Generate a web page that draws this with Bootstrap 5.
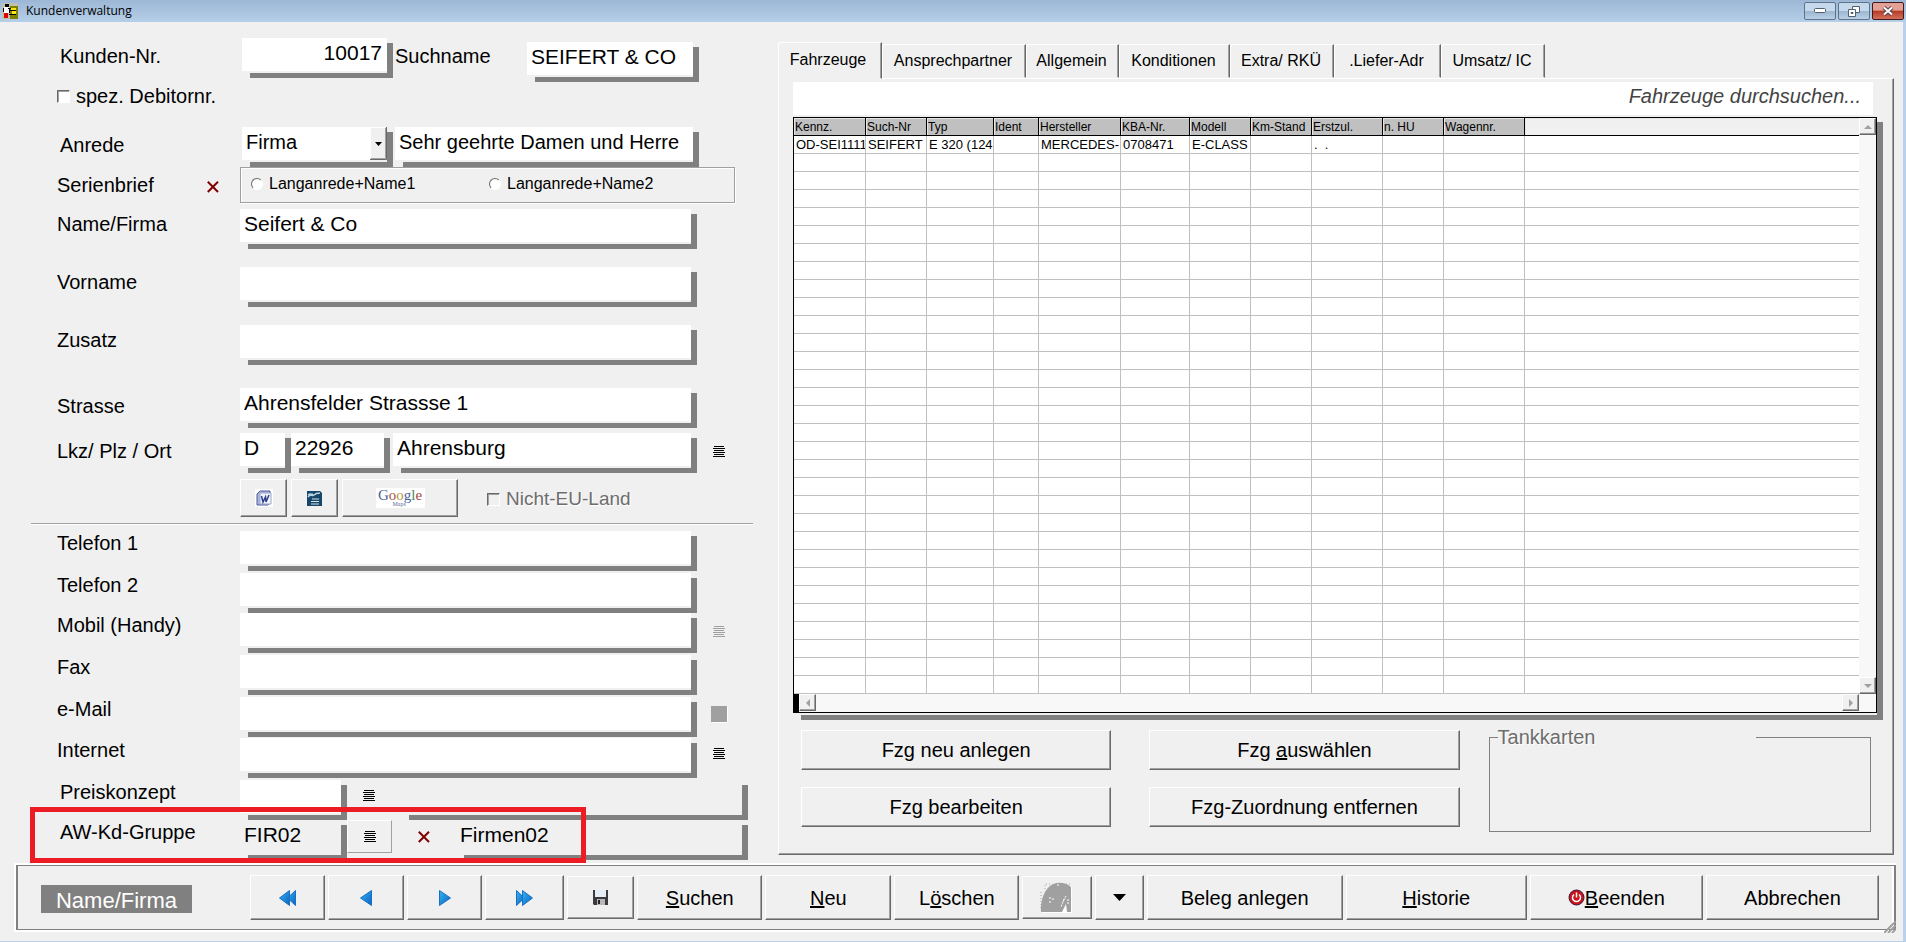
<!DOCTYPE html>
<html lang="de">
<head>
<meta charset="utf-8">
<meta name="viewport" content="width=device-width, initial-scale=1">
<title>Kundenverwaltung</title>
<link href="https://cdn.jsdelivr.net/npm/bootstrap@5.3.0/dist/css/bootstrap.min.css" rel="stylesheet">
<style>
:root{--face:#f0f0f0;--shade:#808080;--edge:#696969;--soft:#a0a0a0}
body{background:var(--face);color:#000;font-family:"Liberation Sans",Arial,sans-serif;font-size:20px;line-height:24px}
.window{border-right:3px solid #b9d1ea;border-bottom:1px solid #b9d1ea}
.titlebar{height:22px;margin-right:-3px;padding:0 2px;background:linear-gradient(#9cb7d5,#b6cfe9);font:12px/22px "Open Sans","Noto Sans",sans-serif}
.capbtn{width:32px;height:18px;padding:0;border:1px solid #5f7389;border-radius:2px;background:linear-gradient(#c5d8ec 48%,#9bb5d0 50%,#b9cfe5);display:flex;align-items:center;justify-content:center}
.capclose{border-color:#43181a;background:linear-gradient(#e3a196 45%,#b83a24 50%,#d2705b)}
.panes{display:grid;grid-template-columns:minmax(0,778fr) minmax(0,1125fr)}
.formpane{padding-top:16px}
.line{display:flex;align-items:flex-start;padding-left:57px}
.cap{flex:0 0 183px}
.inset .cap{padding-left:3px}
.low{padding-top:6px}
.mid{padding-top:3px}
.tail{flex:0 0 81px;display:flex;padding-left:16px}
.tail-s{flex:0 0 30px}
.grow{flex:1 1 0;min-width:0}
.lead-fld{flex:0 0 151px;margin-left:2px}
.s1{margin-top:1px}.s2{margin-top:2px}.s6{margin-top:6px}.s18{margin-top:18px}.s23{margin-top:23px}
/* sunken field with a hard drop shadow to the lower right */
.fld{display:flex;min-width:0;padding:0 6px 7px 0;
 background:linear-gradient(var(--shade),var(--shade)) right bottom/6px calc(100% - 5px) no-repeat,
 linear-gradient(var(--shade),var(--shade)) right bottom/calc(100% - 8px) 5px no-repeat}
.fld input,.fld select{width:100%;min-width:0;height:33px;border:0;border-radius:0;padding:0 5px 3px 4px;background-color:#fff;color:#000;font-size:21px;line-height:24px;outline:0}
.fld .tight{font-size:20px}
.fld input[readonly]{background:var(--face)}
.fld select{appearance:none;background:#fff url("data:image/svg+xml,%3Csvg xmlns='http://www.w3.org/2000/svg' width='17' height='33'%3E%3Cpath fill='%23f0f0f0' d='M0 0h17v33H0z'/%3E%3Cpath fill='none' stroke='%23fff' d='M.5 31V.5H15'/%3E%3Cpath fill='none' stroke='%23a0a0a0' d='M1 31.5h14.500V1'/%3E%3Cpath fill='none' stroke='%23696969' d='M0 32.500h16.500V0'/%3E%3Cpath d='M5 15h7l-3.500 4z'/%3E%3C/svg%3E") right top no-repeat}
.raised,.raised:hover,.raised:active,.raised:disabled{--bs-btn-padding-x:0;--bs-btn-padding-y:0;background:var(--face)!important;border:1px solid!important;border-color:#fff var(--edge) var(--edge) #fff!important;border-radius:0;box-shadow:inset -1px -1px var(--soft);color:#000!important;font-size:20px;line-height:24px;opacity:1;display:flex;align-items:center;justify-content:center;white-space:nowrap;min-width:0}
.raised.thin{width:45px;height:33px;border-color:#fff var(--soft) var(--soft) #fff!important;box-shadow:none}
.flat{padding:0;border:0;background:none;display:block;line-height:0}
.tick{appearance:none;width:13px;height:13px;margin:0;background:#fff;border:1px solid;border-color:var(--edge) #fff #fff var(--edge);box-shadow:inset 1px 1px var(--soft)}
.tick:disabled{background:var(--face)}
.tick+label,.rad+label{padding-left:6px}
.rad{appearance:none;width:12px;height:12px;margin:0;border-radius:50%;background:#fff;border:1px solid;border-color:var(--edge) #fff #fff var(--edge)}
.options{height:36px;padding-left:10px;border:1px solid var(--soft);box-shadow:inset 1px 1px #fff,1px 1px #fff;font-size:16px;line-height:20px;padding-bottom:3px}
.greyed{color:#6d6d6d;text-shadow:1px 1px #fff}
.nocountry{margin:8px 0 0 29px;font-size:19px}
.rule{height:2px;margin:6px 25px 6px 31px;background:linear-gradient(var(--soft) 50%,#fff 50%)}
.toolsrow .raised{height:38px;width:47px}
.toolsrow .maps{width:116px}
.glogo{background:#fff;width:49px;height:20px;font:15px/14px "Liberation Serif",serif;position:relative}
.glogo small{position:absolute;left:17px;top:13px;font-size:6px;line-height:6px;color:#5a6b9c}
.marker{position:absolute;left:30px;top:-13px;width:556px;height:56px;border:5px solid #ed1c24;pointer-events:none}
/* register */
.rightpane{padding:20px 9px 8px 0}
.tabsrow{display:flex;align-items:flex-end;height:36px;margin-bottom:0;border:0;flex-wrap:nowrap}
.tabsrow .nav-item{min-width:0;flex:0 1 104px}
.tabsrow .nav-item:nth-child(2){flex-basis:144px}
.tabsrow .nav-item:nth-child(3){flex-basis:93px}
.tabsrow .nav-item:nth-child(4){flex-basis:111px}
.tabsrow .nav-item:nth-child(6){flex-basis:107px}
.tabsrow .nav-link{width:100%;height:34px;margin:0;padding:0 2px 0 0;border:1px solid;border-color:#fff var(--edge) transparent #fff;border-radius:3px 0 0 0;box-shadow:inset -1px 0 var(--soft);background:var(--face);color:#000;font-size:16px;line-height:24px;white-space:nowrap;overflow:hidden}
.tabsrow .nav-link.active{height:37px;margin-bottom:-1px;padding:0 4px 2px 0;background:var(--face);color:#000;border-color:#fff var(--edge) var(--face) #fff;position:relative}
.page{border:1px solid;border-color:#fff var(--edge) var(--edge) #fff;box-shadow:inset -1px -1px var(--soft);padding:3px 10px 22px 14px}
.seekbox{padding-right:10px}
.seek{display:block;width:100%;height:33px;border:0;padding:0 12px 4px;text-align:right;font-size:20px;font-style:italic;background:#fff}
.seek::placeholder{color:#444;opacity:1}
.gridbox{display:block;margin-top:2px}
.frame{border:1px solid #000;background:#fff}
.cars{table-layout:fixed;width:100%;border-collapse:separate;border-spacing:0;font-size:13px;line-height:16px}
.cars th,.cars td{height:18px;padding:0 0 0 2px;overflow:hidden;white-space:nowrap;border-right:1px solid #c0c0c0;border-bottom:1px solid #c0c0c0}
.cars th{font-size:12px;font-weight:400;padding-left:1px;background:#c0c0c0;border-color:#000;box-shadow:inset 1px 1px #e6e6e6}
.cars th:last-child{background:var(--face)}
.cars th:last-child,.cars td:last-child{border-right:0}
.track{background:#f8f8f8}
.hscroll{height:18px;padding-right:17px;border-left:5px solid #000}
.arrow{width:17px;height:17px;padding:0;background:var(--face);border:1px solid;border-color:#fff var(--edge) var(--edge) #fff;box-shadow:inset -1px -1px var(--soft);display:flex;align-items:center;justify-content:center}
.cmds{display:grid;grid-template-columns:310fr 310fr 373fr;column-gap:38px;margin:10px 12px 0 8px;align-items:start}
.cmds .raised{height:40px}
.cmds .raised+.raised{margin-top:17px}
.cmds fieldset{min-width:0;height:108px;margin:-6px 0 0 -9px;border:1px solid var(--shade);padding:0 0 0 8px}
.cmds legend{float:none;width:258px;max-width:80%;margin:0;font-size:20px;line-height:26px}
/* command bar */
.bar{margin:0 7px 9px 14px;border:2px solid #fff;border-right-width:0;height:69px}
.barin{height:65px;border:solid var(--shade);border-width:1px 2px;padding:9px 15px 0 23px;display:flex;position:relative;box-shadow:inset -2px 0 #fff}
.hint{flex:0 0 151px;height:28px;margin:10px 58px 0 0;background:var(--shade);color:#fff;font-size:22px;line-height:32px;text-align:center;overflow:hidden}
.btns{flex:1;min-width:0;display:grid;column-gap:3px;grid-template-columns:75fr 76fr 75fr 79fr 67fr 125fr 126fr 125fr 69fr 49fr 196fr 181fr 173fr 173fr}
.btns .raised{height:45px}
.btns .short{height:43px;margin-top:1px}
.grip{position:absolute;right:-2px;bottom:-4px}
</style>
</head>
<body>
<svg width="0" height="0" class="position-absolute" aria-hidden="true">
 <defs>
  <linearGradient id="blue" x1="0" y1="0" x2="1" y2="1"><stop offset="0" stop-color="#35b4f5"/><stop offset="1" stop-color="#0a62bd"/></linearGradient>
  <symbol id="list" viewBox="0 0 12 11"><path d="M1 .5h10M0 2.500h12M1 4.500h10M0 6.500h12M1 8.500h10M0 10.500h12" stroke="currentColor" shape-rendering="crispEdges"/></symbol>
  <symbol id="cross" viewBox="0 0 12 12"><path d="M.8.800 11 11M11 .8.800 11" stroke="#800000" stroke-width="2"/></symbol>
  <symbol id="left" viewBox="0 0 12 16"><path d="M11.500.500v15L.5 8z" fill="url(#blue)" stroke="#1a6fc4"/></symbol>
 </defs>
</svg>
<div class="window">
 <header class="titlebar d-flex align-items-center">
  <svg width="16" height="16" viewBox="0 0 16 16" shape-rendering="crispEdges"><path fill="#c0c0b0" d="M0 0h16v16H0z"/><path fill="#000" d="M3 1h4v3H3zM8 4h7v2H8zM1 5h1v4H1zM7 6h2v4H7z"/><path fill="#fff" d="M2 4h5v6H2z"/><path fill="#e00000" d="M2 10h4v5H2z"/><path fill="#808000" d="M8 3h8v13H8z"/><path fill="#ffe81a" d="M9 5h5v2H9zM10 8h4v3h-4z"/><path fill="#000" d="M8 7h6v1H8zM7 11h7v1H7zM6 5h3v1H6z"/></svg>
  <span class="ms-2">Kundenverwaltung</span>
  <div class="ms-auto d-flex" style="gap:2px">
   <button class="capbtn" type="button" aria-label="Minimieren"><svg width="12" height="6"><rect x=".5" y=".5" width="11" height="4" rx="1" fill="#fff" stroke="#53606f"/></svg></button>
   <button class="capbtn" type="button" aria-label="Wiederherstellen"><svg width="12" height="11" fill="#fff" stroke="#53606f"><path d="M4.500.500h7v6h-7z"/><path d="M.5 3.500h7v7h-7z"/><path d="M3 6.500h2v1H3z"/></svg></button>
   <button class="capbtn capclose" type="button" aria-label="Schließen"><svg width="12" height="10"><path d="M2 1.500 10 8.500M10 1.500 2 8.500" stroke="#53434a" stroke-width="4"/><path d="M2 1.500 10 8.500M10 1.500 2 8.500" stroke="#fff" stroke-width="2"/></svg></button>
  </div>
 </header>

 <main class="panes">
  <form class="formpane">
   <div class="line inset">
    <label class="cap low" for="nr">Kunden-Nr.</label>
    <div class="fld lead-fld"><input id="nr" class="text-end" value="10017"></div>
    <label class="low" for="such" style="flex:0 0 134px;padding-left:2px">Suchname</label>
    <div class="fld grow mt-1"><input id="such" value="SEIFERT &amp; CO"></div>
    <div style="width:79px"></div>
   </div>
   <div class="line align-items-center s2">
    <input class="tick" type="checkbox" id="spez"><label for="spez">spez. Debitornr.</label>
   </div>
   <div class="line inset" style="margin-top:19px">
    <label class="cap low" for="anrede">Anrede</label>
    <div class="fld lead-fld"><select id="anrede" class="tight"><option>Firma</option></select></div>
    <div class="fld grow" style="margin-left:2px"><input aria-label="Briefanrede" class="tight" value="Sehr geehrte Damen und Herre"></div>
    <div style="width:79px"></div>
   </div>
   <div class="line">
    <div class="cap low d-flex">Serienbrief<button class="flat ms-auto pt-1" style="margin-right:21px" type="button" aria-label="Serienbrief löschen"><svg width="12" height="12"><use href="#cross"/></svg></button></div>
    <div class="options flex-fill d-flex align-items-center">
     <input class="rad" type="radio" name="lang" id="l1"><label for="l1" style="width:226px">Langanrede+Name1</label>
     <input class="rad" type="radio" name="lang" id="l2"><label for="l2">Langanrede+Name2</label>
    </div>
    <div style="width:43px"></div>
   </div>
   <div class="line s6"><label class="cap mid" for="f1">Name/Firma</label><div class="fld grow"><input id="f1" value="Seifert &amp; Co"></div><div class="tail"></div></div>
   <div class="line s18"><label class="cap mid" for="f2">Vorname</label><div class="fld grow"><input id="f2"></div><div class="tail"></div></div>
   <div class="line s18"><label class="cap mid" for="f3">Zusatz</label><div class="fld grow"><input id="f3"></div><div class="tail"></div></div>
   <div class="line s23"><label class="cap low" for="f4">Strasse</label><div class="fld grow"><input id="f4" value="Ahrensfelder Strassse 1"></div><div class="tail"></div></div>
   <div class="line" style="margin-top:5px"><label class="cap low" for="f5">Lkz/ Plz / Ort</label>
    <div class="fld" style="flex:0 0 51px"><input id="f5" value="D"></div>
    <div class="fld" style="flex:0 0 99px"><input aria-label="Plz" value="22926"></div>
    <div class="fld grow" style="margin-left:3px"><input aria-label="Ort" value="Ahrensburg"></div>
    <div class="tail" style="padding-top:13px"><button class="flat" type="button" aria-label="Ortsliste"><svg width="12" height="11"><use href="#list"/></svg></button></div>
   </div>
   <div class="line toolsrow s6">
    <div class="cap"></div>
    <button class="btn raised" type="button" aria-label="Word"><svg width="18" height="18" viewBox="0 0 18 18"><path fill="#fff" d="M0 0h18v18H0z"/><path d="M2 5 5 2h10v12l-2 2H2z" fill="#aab6dc" stroke="#4a5a9c"/><path d="M5 4h11v11H5z" fill="#f4f6fc" stroke="#9aa6cc"/><path d="M6.500 7l1.500 6 2.500-5 .5 5L14 6" fill="none" stroke="#2a3f8c" stroke-width="1.500"/></svg></button>
    <button class="btn raised ms-1" type="button" aria-label="OpenOffice"><svg width="15" height="15" viewBox="0 0 15 15"><path fill="#184668" d="M0 0h13l2 2v13H0z"/><path d="M1 6c3-4 4 0 6-2s4-2 6-2M1 4c3-2 3 0 5-1" stroke="#b9d3e4" fill="none" stroke-width="1.500"/><path d="M5 8h7M4 10.500h8M4 13h8" stroke="#d5e4ee"/></svg></button>
    <button class="btn raised ms-1 maps" type="button" aria-label="Google Maps"><span class="glogo"><span style="color:#4a5f9e">G</span><span style="color:#a8553f">o</span><span style="color:#b3993e">o</span><span style="color:#4a5f9e">g</span><span style="color:#4c8a52">l</span><span style="color:#a8434a">e</span><small>Maps</small></span></button>
    <div class="d-flex align-items-center greyed nocountry"><input class="tick" type="checkbox" id="eu" disabled><label for="eu">Nicht-EU-Land</label></div>
   </div>
   <div class="rule"></div>
   <div class="line"><label class="cap" for="t1">Telefon 1</label><div class="fld grow"><input id="t1"></div><div class="tail"></div></div>
   <div class="line s2"><label class="cap" for="t2">Telefon 2</label><div class="fld grow"><input id="t2"></div><div class="tail"></div></div>
   <div class="line"><label class="cap" for="t3">Mobil (Handy)</label><div class="fld grow"><input id="t3"></div><div class="tail" style="padding-top:13px"><button class="flat" style="color:#a0a0a0" type="button" disabled aria-label="Mobil"><svg width="12" height="11"><use href="#list"/></svg></button></div></div>
   <div class="line s2"><label class="cap" for="t4">Fax</label><div class="fld grow"><input id="t4"></div><div class="tail"></div></div>
   <div class="line s2"><label class="cap" for="t5">e-Mail</label><div class="fld grow"><input id="t5"></div><div class="tail" style="padding:9px 0 0 14px"><button class="flat" type="button" disabled aria-label="e-Mail senden"><svg width="17" height="17"><path fill="#fff" d="M1 1h16v16H1z"/><path fill="#a0a0a0" d="M0 0h16v16H0z"/></svg></button></div></div>
   <div class="line s1"><label class="cap" for="t6">Internet</label><div class="fld grow"><input id="t6"></div><div class="tail" style="padding-top:10px"><button class="flat" type="button" aria-label="Internet"><svg width="12" height="11"><use href="#list"/></svg></button></div></div>
   <div class="line inset s2"><label class="cap" for="p1">Preiskonzept</label>
    <div class="fld" style="flex:0 0 107px"><input id="p1"></div>
    <button class="flat" style="padding:10px 26px 0 16px" type="button" aria-label="Preiskonzept wählen"><svg width="12" height="11"><use href="#list"/></svg></button>
    <div class="fld grow"><input readonly aria-label="Preiskonzept Text"></div><div class="tail-s"></div>
   </div>
   <div class="line inset position-relative"><label class="cap" for="a1">AW-Kd-Gruppe</label>
    <div class="fld" style="flex:0 0 107px"><input id="a1" readonly value="FIR02"></div>
    <button class="btn raised thin" type="button" aria-label="Gruppe wählen"><svg width="12" height="11"><use href="#list"/></svg></button>
    <button class="flat" style="padding:11px 26px 0 26px" type="button" aria-label="Gruppe löschen"><svg width="12" height="12"><use href="#cross"/></svg></button>
    <div class="fld grow"><input readonly aria-label="Gruppe Text" value="Firmen02"></div><div class="tail-s"></div>
    <div class="marker"></div>
   </div>
  </form>

  <section class="rightpane">
   <ul class="nav nav-tabs tabsrow" role="tablist">
    <li class="nav-item"><button class="nav-link active" type="button">Fahrzeuge</button></li>
    <li class="nav-item"><button class="nav-link" type="button">Ansprechpartner</button></li>
    <li class="nav-item"><button class="nav-link" type="button">Allgemein</button></li>
    <li class="nav-item"><button class="nav-link" type="button">Konditionen</button></li>
    <li class="nav-item"><button class="nav-link" type="button">Extra/ RKÜ</button></li>
    <li class="nav-item"><button class="nav-link" type="button">.Liefer-Adr</button></li>
    <li class="nav-item"><button class="nav-link" type="button">Umsatz/ IC</button></li>
   </ul>
   <div class="page">
    <div class="seekbox"><input class="seek" type="text" aria-label="Fahrzeuge durchsuchen" placeholder="Fahrzeuge durchsuchen..."></div>
    <div class="fld gridbox"><div class="frame">
     <div class="d-flex">
      <div class="grow">
       <table class="cars">
        <colgroup><col style="width:72px"><col style="width:61px"><col style="width:67px"><col style="width:45px"><col style="width:82px"><col style="width:69px"><col style="width:61px"><col style="width:61px"><col style="width:71px"><col style="width:61px"><col style="width:81px"><col></colgroup>
        <thead><tr><th>Kennz.</th><th>Such-Nr</th><th>Typ</th><th>Ident</th><th>Hersteller</th><th>KBA-Nr.</th><th>Modell</th><th>Km-Stand</th><th>Erstzul.</th><th>n. HU</th><th>Wagennr.</th><th></th></tr></thead>
        <tbody id="rows"><tr><td>OD-SEI1111</td><td>SEIFERT</td><td>E 320 (124</td><td></td><td>MERCEDES-</td><td>0708471</td><td>E-CLASS</td><td></td><td>.&nbsp; .</td><td></td><td></td><td></td></tr></tbody>
       </table>
      </div>
      <div class="track d-flex flex-column justify-content-between">
       <button class="arrow" type="button" aria-label="Nach oben"><svg width="8" height="4"><path d="M0 4h8L4 0z" fill="#a0a0a0"/></svg></button>
       <button class="arrow" type="button" aria-label="Nach unten"><svg width="8" height="4"><path d="M0 0h8L4 4z" fill="#a0a0a0"/></svg></button>
      </div>
     </div>
     <div class="track d-flex hscroll">
      <button class="arrow" type="button" aria-label="Nach links"><svg width="4" height="8"><path d="M4 0v8L0 4z" fill="#a0a0a0"/></svg></button>
      <button class="arrow ms-auto" type="button" aria-label="Nach rechts"><svg width="4" height="8"><path d="M0 0v8l4-4z" fill="#a0a0a0"/></svg></button>
     </div>
    </div></div>
    <div class="cmds">
     <div><button class="btn raised w-100" type="button">Fzg neu anlegen</button><button class="btn raised w-100" type="button">Fzg bearbeiten</button></div>
     <div><button class="btn raised w-100" type="button"><span>Fzg <u>a</u>uswählen</span></button><button class="btn raised w-100" type="button">Fzg-Zuordnung entfernen</button></div>
     <fieldset><legend class="greyed">Tankkarten</legend></fieldset>
    </div>
   </div>
  </section>
 </main>

 <footer class="bar"><div class="barin">
  <div class="hint">Name/Firma</div>
  <div class="btns">
   <button class="btn raised" type="button" aria-label="Erster"><svg width="17" height="16" fill="url(#blue)" stroke="#1a6fc4"><path d="M16.500.500v15l-8-7.500z"/><path d="M10.500.500v15L.5 8z"/></svg></button>
   <button class="btn raised" type="button" aria-label="Zurück"><svg width="12" height="16"><use href="#left"/></svg></button>
   <button class="btn raised" type="button" aria-label="Weiter"><svg width="12" height="16"><path d="M.5.500v15l11-7.500z" fill="url(#blue)" stroke="#1a6fc4"/></svg></button>
   <button class="btn raised" type="button" aria-label="Letzter"><svg width="17" height="16" fill="url(#blue)" stroke="#1a6fc4"><path d="M.5.500v15l8-7.500z"/><path d="M6.500.500v15l10-7.500z"/></svg></button>
   <button class="btn raised short" type="button" aria-label="Speichern"><svg width="15" height="15"><path fill="#3a3a40" d="M0 0h15v15H1l-1-1z"/><path fill="#e6eef5" d="M2 0h11v7H2z"/><path fill="#b8b8b8" d="M4 9h8v6H4z"/><path fill="#222" d="M5 10h2v4H5z"/></svg></button>
   <button class="btn raised" type="button"><span><u>S</u>uchen</span></button>
   <button class="btn raised" type="button"><span><u>N</u>eu</span></button>
   <button class="btn raised" type="button"><span>L<u>ö</u>schen</span></button>
   <button class="btn raised short" type="button" disabled aria-label="Bild"><svg width="33" height="31"><path d="M2 31C1 20 5 6 14 2c6-2 13-2 18 3v26z" fill="#fff"/><path d="M1 30C0 20 4 6 13 2c6-2 13-2 18 3v25h-4l-1-8-4 8z" fill="#a0a0a0"/><path d="M5 7V2h6M26 2h5M1 10v16" stroke="#a0a0a0" fill="none" stroke-dasharray="1 2"/><path d="M26 14l-3 6M24 17l-3 8M28 17v5M10 15v2M13 16v2M9 20h2M17 3h2" stroke="#fff" stroke-dasharray="2 1"/></svg></button>
   <button class="btn raised" type="button" aria-label="Mehr"><svg width="13" height="7"><path d="M0 0h13L6.500 7z"/></svg></button>
   <button class="btn raised" type="button">Beleg anlegen</button>
   <button class="btn raised" type="button"><span><u>H</u>istorie</span></button>
   <button class="btn raised" type="button"><svg width="17" height="17"><circle cx="8.500" cy="8.500" r="7.500" fill="#c8151b" stroke="#3c1440"/><path d="M6 5.500a4 4 0 1 0 5 0M8.500 3.500v5" fill="none" stroke="#fff" stroke-width="1.500"/></svg><span><u>B</u>eenden</span></button>
   <button class="btn raised" type="button">Abbrechen</button>
  </div>
  <svg class="grip" width="12" height="12" stroke="#a0a0a0" stroke-width="2"><path d="M0 12 12 0M4 12l8-8M8 12l4-4"/></svg>
 </div></footer>
</div>
<script src="https://cdn.jsdelivr.net/npm/bootstrap@5.3.0/dist/js/bootstrap.bundle.min.js"></script>
<script>
// empty grid lines below the vehicle records
const rows = document.getElementById('rows');
for (let i = 0; i < 30; i++) rows.insertAdjacentHTML('beforeend', '<tr>' + '<td></td>'.repeat(12) + '</tr>');
</script>
</body>
</html>
